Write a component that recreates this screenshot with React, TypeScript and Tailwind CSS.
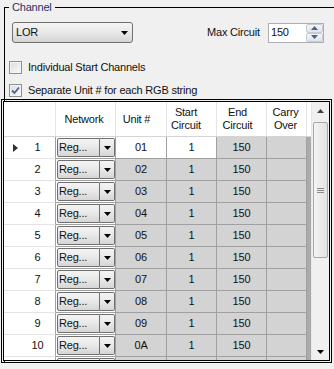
import React from "react";

const units = ["01", "02", "03", "04", "05", "06", "07", "08", "09", "0A"];

function DownArrow({ className = "" }: { className?: string }) {
  return (
    <svg width="7" height="4" viewBox="0 0 7 4" className={className}>
      <polygon points="0,0 7,0 3.5,4" fill="#000" />
    </svg>
  );
}

function CheckBox({ checked }: { checked?: boolean }) {
  return (
    <div className="flex h-[13px] w-[13px] items-center justify-center border border-[#8e8f8f] bg-linear-to-br from-[#dcdcdc] to-[#fbfbfb]">
      <div className="flex h-[11px] w-[11px] items-center justify-center border border-[#f4f4f4]">
        {checked && (
          <svg width="9" height="9" viewBox="0 0 9 9">
            <path d="M1 4.5 L3.5 7 L8 1.5" fill="none" stroke="#4a5f9c" strokeWidth="1.8" />
          </svg>
        )}
      </div>
    </div>
  );
}

function CellCombo({ blank }: { blank?: boolean }) {
  return (
    <div className="ml-[1px] mt-[1px] flex h-[19px] w-[58px]">
      <div className="flex w-[43px] items-center rounded-l-[2px] border border-[#707070] bg-linear-to-b from-[#f4f4f4] via-[#e8e8e8] to-[#d6d6d6] pl-[1px]">
        {blank ? null : "Reg..."}
      </div>
      <div className="flex w-[15px] items-center justify-center rounded-r-[2px] border border-l-0 border-[#707070] bg-linear-to-b from-[#f4f4f4] via-[#e8e8e8] to-[#d6d6d6]">
        {blank ? null : <DownArrow />}
      </div>
    </div>
  );
}

function GridRow({ n, unit, current, blank }: { n?: number; unit?: string; current?: boolean; blank?: boolean }) {
  const cell = current ? "bg-white" : "bg-[#d3d3d3]";
  return (
    <div className="flex h-[22px] w-[303px] shrink-0">
      <div className="flex w-[52px] items-center border-b border-r border-b-[#e4e4e4] border-r-[#a0a0a0] bg-white pl-[9px]">
        <span className="flex w-[5px]">
          {current && (
            <svg width="5" height="8" viewBox="0 0 5 8">
              <polygon points="0,0 5,4 0,8" fill="#303030" />
            </svg>
          )}
        </span>
        <span className="flex-1 pl-[2px] text-center">{n}</span>
      </div>
      <div className="w-[60px] border-b border-r border-[#a0a0a0] bg-white">
        <CellCombo blank={blank} />
      </div>
      <div className={`flex w-[51px] items-center justify-center border-b border-r border-[#a0a0a0] ${cell}`}>{unit}</div>
      <div className={`flex w-[50px] items-center justify-center border-b border-r border-[#a0a0a0] ${cell}`}>{blank ? null : "1"}</div>
      <div className="flex w-[50px] items-center justify-center border-b border-r border-[#a0a0a0] bg-[#d3d3d3]">{blank ? null : "150"}</div>
      <div className="w-[40px] border-b border-r border-[#a0a0a0] bg-[#d3d3d3]" />
    </div>
  );
}

function ScrollBar() {
  return (
    <div className="flex w-[17px] flex-col items-center border-l border-[#e8e8e8] bg-[#f0f0f0]">
      <div className="flex h-[17px] w-full items-center justify-center">
        <svg width="7" height="4" viewBox="0 0 7 4">
          <polygon points="0,4 7,4 3.5,0" fill="#404040" />
        </svg>
      </div>
      <div className="mt-[3px] flex h-[136px] w-[15px] items-center justify-center rounded-[2px] border border-[#a8a8a8] bg-linear-to-r from-[#f4f4f4] to-[#e2e2e2]">
        <svg width="7" height="7" viewBox="0 0 7 7">
          <path d="M0 1.5 H7 M0 3.5 H7 M0 5.5 H7" stroke="#8a8a8a" strokeWidth="1" />
        </svg>
      </div>
      <div className="flex-1" />
      <div className="flex h-[17px] w-full items-center justify-center">
        <DownArrow />
      </div>
    </div>
  );
}

export default function App() {
  return (
    <div className="h-[369px] w-[334px] overflow-hidden bg-[#f0f0f0] font-['Liberation_Sans',Arial,sans-serif] text-[11px] tracking-[-0.2px] text-[#111]">
      <fieldset className="ml-[4px] w-[340px] border-l border-t border-black">
        <legend className="ml-[4px] px-[3px] leading-[14px] text-[#1d3569]">Channel</legend>

        <div className="mt-[8px] flex h-[21px] items-center">
          <div className="ml-[7px] flex h-[21px] w-[121px] items-center justify-between rounded-[3px] border border-[#707070] bg-linear-to-b from-[#f4f4f4] via-[#e9e9e9] to-[#d4d4d4] pl-[3px] pr-[4px]">
            <span>LOR</span>
            <DownArrow />
          </div>
          <span className="ml-[74px] w-[61px]">Max Circuit</span>
          <div className="flex h-[20px] w-[56px] items-center border border-[#abadb3] bg-white pl-[2px]">
            <span className="flex-1">150</span>
            <div className="flex h-[18px] w-[17px] flex-col">
              <div className="flex flex-1 items-center justify-center rounded-[2px] border border-[#c6cbd5] bg-linear-to-b from-[#f4f6f9] to-[#dfe4ec]">
                <svg width="7" height="4" viewBox="0 0 7 4">
                  <polygon points="0,4 7,4 3.5,0" fill="#4d6185" />
                </svg>
              </div>
              <div className="flex flex-1 items-center justify-center rounded-[2px] border border-[#c6cbd5] bg-linear-to-b from-[#f4f6f9] to-[#dfe4ec]">
                <svg width="7" height="4" viewBox="0 0 7 4">
                  <polygon points="0,0 7,0 3.5,4" fill="#4d6185" />
                </svg>
              </div>
            </div>
          </div>
        </div>

        <label className="ml-[4px] mt-[16px] flex h-[16px] items-center gap-[6px]">
          <CheckBox />
          <span>Individual Start Channels</span>
        </label>
        <label className="ml-[4px] mt-[7px] flex h-[16px] items-center gap-[6px]">
          <CheckBox checked />
          <span>Separate Unit # for each RGB string</span>
        </label>

        <div className="-ml-[4px] mt-[1px] h-[264px] w-[331px] border border-black p-[1px]">
          <div className="flex h-full border border-black">
            <div className="flex w-[307px] flex-col">
              <div className="flex h-[35px] shrink-0 border-b border-[#d5d5d5] bg-white leading-[13px]">
                <div className="w-[52px] border-r border-[#e4e4e4]" />
                <div className="flex w-[60px] items-center justify-center border-r border-[#e4e4e4] pr-[3px]">Network</div>
                <div className="flex w-[51px] items-center justify-center border-r border-[#e4e4e4] pr-[9px]">Unit #</div>
                <div className="flex w-[50px] items-center justify-center border-r border-[#e4e4e4] pr-[11px] text-center">Start<br />Circuit</div>
                <div className="flex w-[50px] items-center justify-center border-r border-[#e4e4e4] pr-[8px] text-center">End<br />Circuit</div>
                <div className="flex w-[40px] items-center justify-center border-r border-[#e4e4e4] pr-[2px] text-center">Carry<br />Over</div>
                <div className="flex-1" />
              </div>
              <div className="flex flex-1 flex-col overflow-hidden bg-[#ababab]">
                {units.map((u, i) => (
                  <GridRow key={u} n={i + 1} unit={u} current={i === 0} />
                ))}
                <GridRow blank />
              </div>
            </div>
            <ScrollBar />
          </div>
        </div>
      </fieldset>
    </div>
  );
}
